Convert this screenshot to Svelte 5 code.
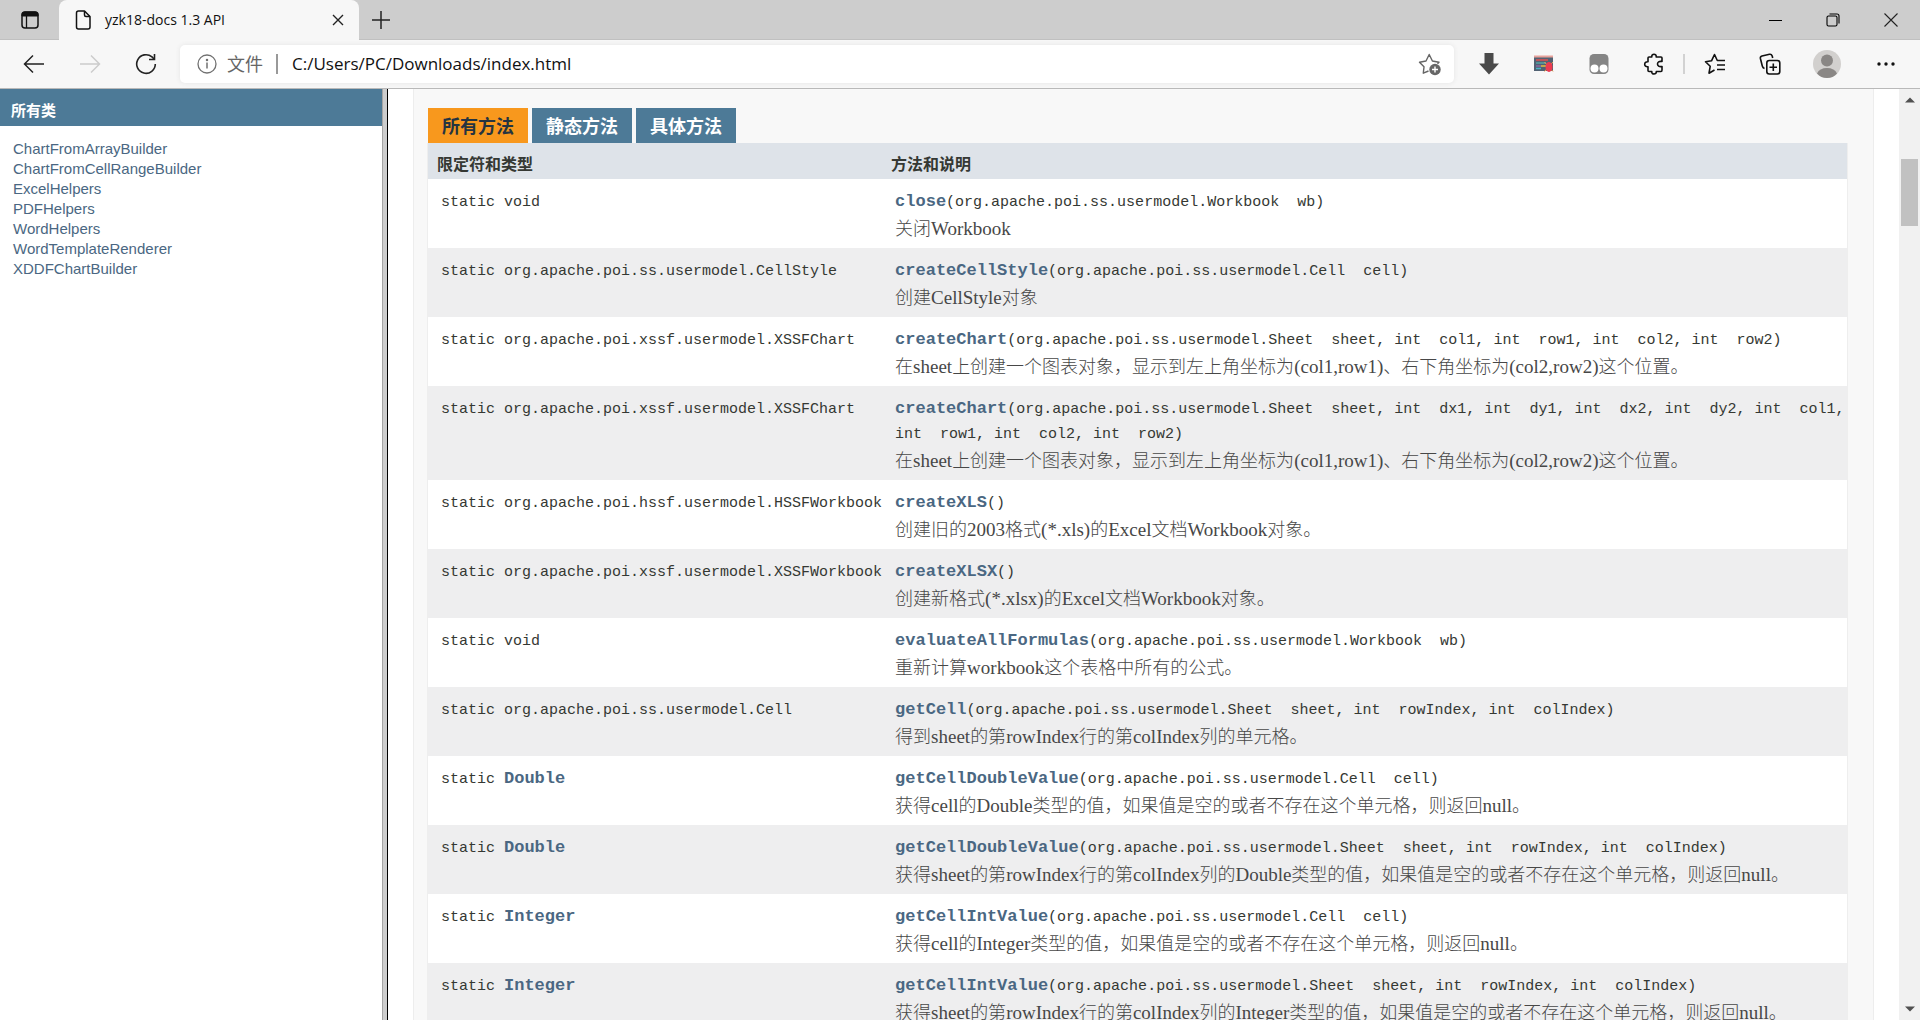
<script lang="ts">
  type Method = {
    type: string;
    linked?: boolean;
    name: string;
    params: string[];
    desc: string;
  };

  const classes = [
    "ChartFromArrayBuilder",
    "ChartFromCellRangeBuilder",
    "ExcelHelpers",
    "PDFHelpers",
    "WordHelpers",
    "WordTemplateRenderer",
    "XDDFChartBuilder",
  ];

  const tabs = ["所有方法", "静态方法", "具体方法"];
  let activeTab = $state(0);
  let address = $state("C:/Users/PC/Downloads/index.html");

  const model = "org.apache.poi.ss.usermodel.";
  const workbook = model + "Workbook wb";
  const cell = model + "Cell cell";
  const sheet = model + "Sheet sheet";

  const methods: Method[] = [
    { type: "void", name: "close", params: [workbook], desc: "关闭Workbook" },
    { type: model + "CellStyle", name: "createCellStyle", params: [cell], desc: "创建CellStyle对象" },
    {
      type: "org.apache.poi.xssf.usermodel.XSSFChart",
      name: "createChart",
      params: [sheet, "int col1", "int row1", "int col2", "int row2"],
      desc: "在sheet上创建一个图表对象，显示到左上角坐标为(col1,row1)、右下角坐标为(col2,row2)这个位置。",
    },
    {
      type: "org.apache.poi.xssf.usermodel.XSSFChart",
      name: "createChart",
      params: [sheet, "int dx1", "int dy1", "int dx2", "int dy2", "int col1", "int row1", "int col2", "int row2"],
      desc: "在sheet上创建一个图表对象，显示到左上角坐标为(col1,row1)、右下角坐标为(col2,row2)这个位置。",
    },
    { type: "org.apache.poi.hssf.usermodel.HSSFWorkbook", name: "createXLS", params: [], desc: "创建旧的2003格式(*.xls)的Excel文档Workbook对象。" },
    { type: "org.apache.poi.xssf.usermodel.XSSFWorkbook", name: "createXLSX", params: [], desc: "创建新格式(*.xlsx)的Excel文档Workbook对象。" },
    { type: "void", name: "evaluateAllFormulas", params: [workbook], desc: "重新计算workbook这个表格中所有的公式。" },
    { type: model + "Cell", name: "getCell", params: [sheet, "int rowIndex", "int colIndex"], desc: "得到sheet的第rowIndex行的第colIndex列的单元格。" },
    { type: "Double", linked: true, name: "getCellDoubleValue", params: [cell], desc: "获得cell的Double类型的值，如果值是空的或者不存在这个单元格，则返回null。" },
    {
      type: "Double",
      linked: true,
      name: "getCellDoubleValue",
      params: [sheet, "int rowIndex", "int colIndex"],
      desc: "获得sheet的第rowIndex行的第colIndex列的Double类型的值，如果值是空的或者不存在这个单元格，则返回null。",
    },
    { type: "Integer", linked: true, name: "getCellIntValue", params: [cell], desc: "获得cell的Integer类型的值，如果值是空的或者不存在这个单元格，则返回null。" },
    {
      type: "Integer",
      linked: true,
      name: "getCellIntValue",
      params: [sheet, "int rowIndex", "int colIndex"],
      desc: "获得sheet的第rowIndex行的第colIndex列的Integer类型的值，如果值是空的或者不存在这个单元格，则返回null。",
    },
  ];

  // type and parameter name stay together on one line
  function signature(params: string[]) {
    return "(" + params.map((p) => p.replace(" ", "\u00a0\u00a0")).join(", ") + ")";
  }

  // odd entries are the latin runs
  function runs(text: string) {
    return text.split(/([\x21-\x7e]+)/);
  }
</script>

<div class="browser">
  <header class="titlebar">
    <button class="workspace" aria-label="Tab actions">
      <svg width="18" height="18" viewBox="0 0 18 18" fill="none" stroke="#111">
        <rect x="1" y="1" width="16" height="16" rx="3" stroke-width="1.5" />
        <path d="M1 5V3.500Q1 1 3.500 1H14.500Q17 1 17 3.500V5Z" fill="#111" />
        <path d="M5.500 5V17" stroke-width="1.300" />
      </svg>
    </button>
    <div class="page-tab">
      <svg width="16" height="20" viewBox="0 0 16 20" fill="none" stroke="#111" stroke-width="1.500" stroke-linejoin="round">
        <path d="M3.500 1H9.500L15 6.500V17Q15 19 13 19H3.500Q1.500 19 1.500 17V3Q1.500 1 3.500 1Z" />
        <path d="M9.500 1V5Q9.500 6.500 11 6.500H15" />
      </svg>
      <span class="page-title">yzk18-docs 1.3 API</span>
      <button class="close-tab" aria-label="Close tab">
        <svg width="12" height="12" viewBox="0 0 12 12" stroke="#222" stroke-width="1.400"><path d="M1 1L11 11M11 1L1 11" /></svg>
      </button>
    </div>
    <button class="new-tab" aria-label="New tab">
      <svg width="18" height="18" viewBox="0 0 18 18" stroke="#222" stroke-width="1.500"><path d="M9 0V18M0 9H18" /></svg>
    </button>
    <div class="window-controls">
      <button aria-label="Minimize">
        <svg width="13" height="13" viewBox="0 0 13 13" stroke="#000"><path d="M0 6.500H13" /></svg>
      </button>
      <button aria-label="Restore">
        <svg width="14" height="14" viewBox="0 0 14 14" fill="none" stroke="#000" stroke-width="1.100">
          <rect x="1" y="3" width="10" height="10" rx="1.500" />
          <path d="M3.500 1H11Q13 1 13 3V10.500" />
        </svg>
      </button>
      <button aria-label="Close">
        <svg width="14" height="14" viewBox="0 0 14 14" stroke="#222" stroke-width="1.100"><path d="M.5 .5L13.500 13.500M13.500 .5L.5 13.500" /></svg>
      </button>
    </div>
  </header>

  <nav class="toolbar">
    <div class="history">
      <button aria-label="Back">
        <svg width="22" height="20" viewBox="0 0 22 20" fill="none" stroke="#222" stroke-width="1.500"><path d="M21 10H1.500M10 1.500L1.500 10L10 18.500" /></svg>
      </button>
      <button aria-label="Forward" disabled>
        <svg width="22" height="20" viewBox="0 0 22 20" fill="none" stroke="#ccc" stroke-width="1.500"><path d="M1 10H20.500M12 1.500L20.500 10L12 18.500" /></svg>
      </button>
      <button aria-label="Refresh">
        <svg width="22" height="22" viewBox="0 0 22 22" fill="none" stroke="#222" stroke-width="1.600">
          <path d="M20.300 11A9.300 9.300 0 1 1 17 3.900L19.500 6.500" />
          <path d="M19.500 1V6.500H14" />
        </svg>
      </button>
    </div>

    <div class="address">
      <svg width="20" height="20" viewBox="0 0 20 20" fill="none" stroke="#717171" stroke-width="1.300">
        <circle cx="10" cy="10" r="9" />
        <path d="M10 8.500V14.500" stroke-width="1.500" />
        <circle cx="10" cy="6" r=".6" fill="#717171" />
      </svg>
      <label for="url">文件</label>
      <input id="url" type="text" spellcheck="false" bind:value={address} />
      <button class="add-favorite" aria-label="Add to favorites">
        <svg width="24" height="24" viewBox="0 0 24 24" fill="none" stroke="#666" stroke-width="1.400" stroke-linejoin="round">
          <path d="M10.500 19L5.300 21.200L6 14.800L1.500 10.200L8 9L11.200 2.500L14.400 9L21 10.200L19.500 11.800" />
          <circle cx="17" cy="17.500" r="5.700" fill="#666" stroke="none" />
          <path d="M17 14.500V20.500M14 17.500H20" stroke="#fff" />
        </svg>
      </button>
    </div>

    <div class="extensions">
      <button aria-label="Downloads">
        <svg width="22" height="22" viewBox="0 0 22 22" fill="#4a4a4a"><path d="M6.500 0H15.500V10.500H21L11 21.500L1 10.500H6.500Z" /></svg>
      </button>
      <button aria-label="Script debugger">
        <svg width="22" height="18" viewBox="0 0 22 18">
          <rect x="1" y="1" width="19" height="15" fill="#526273" />
          <path d="M1 1.500H20" stroke="#e8a29b" stroke-width="2" />
          <path d="M3 5H15" stroke="#e25151" stroke-width="1.500" />
          <path d="M3 8H13" stroke="#55a4a5" stroke-width="1.500" />
          <path d="M3 11H8" stroke="#9066a0" stroke-width="1.500" />
          <path d="M8 11H13" stroke="#e6bd41" stroke-width="1.500" />
          <path d="M3 13.500H8" stroke="#4bb3c5" stroke-width="1.500" />
          <path d="M11.500 7L20 16.500M20 7L11.500 16.500" stroke="#f0a150" />
          <ellipse cx="16" cy="12" rx="3.500" ry="5" fill="#ed3b50" />
        </svg>
      </button>
      <button aria-label="User scripts">
        <svg width="20" height="20" viewBox="0 0 20 20">
          <rect x=".5" y="0" width="19" height="20" rx="4.500" fill="#858585" />
          <circle cx="5.500" cy="14.500" r="4" fill="#fff" />
          <circle cx="14.500" cy="14.500" r="4" fill="#fff" />
        </svg>
      </button>
      <button aria-label="Extensions">
        <svg width="22" height="22" viewBox="0 0 22 22" fill="none" stroke="#111" stroke-width="1.600" stroke-linejoin="round">
          <path d="M6 4H8.800C8.500 2 9.800 1.200 11 1.200S13.500 2 13.200 4H18Q19 4 19 5V8.500C16 8 14.500 9.300 14.500 11S16 14 19 13.500V17Q19 18.500 18 18.500H13.300C13.500 20.200 12.300 21 11 21S8.500 20.200 8.800 18.500H6Q5 18.500 5 17.500V13.700C2.800 14 1.700 12.700 1.700 11.200S2.800 8.500 5 8.700V5Q5 4 6 4Z" />
        </svg>
      </button>
      <span class="divider"></span>
      <button aria-label="Favorites">
        <svg width="22" height="22" viewBox="0 0 22 22" fill="none" stroke="#111" stroke-width="1.600" stroke-linejoin="round">
          <path d="M10.500 17L5 20.200L6.200 13.300L1.500 8.700L7.500 7.800L10.500 1.500L13.300 7.500H21M13 12H21M13 16.500H21" />
        </svg>
      </button>
      <button aria-label="Collections">
        <svg width="22" height="22" viewBox="0 0 22 22" fill="none" stroke="#111" stroke-width="1.600" stroke-linejoin="round">
          <rect x="7.800" y="7.500" width="13" height="13.500" rx="2.500" />
          <path d="M14.300 10.500V18M10.500 14.300H18" />
          <path d="M5.500 15.500Q3.800 15 3.300 13L1.400 5.500Q1 3.500 3 3L10.500 1.300Q12.500 1 13.200 3L13.700 5" />
        </svg>
      </button>
      <button class="profile" aria-label="Profile">
        <svg width="28" height="28" viewBox="0 0 28 28">
          <circle cx="14" cy="14" r="14" fill="#d2d0ce" />
          <circle cx="14" cy="10.500" r="6" fill="#8a8785" />
          <path d="M4 23.500Q6.500 18 14 18T24 23.500Q20 28 14 28T4 23.500Z" fill="#8a8785" />
        </svg>
      </button>
      <button class="more" aria-label="Settings and more">
        <svg width="18" height="4" viewBox="0 0 18 4" fill="#111"><circle cx="2" cy="2" r="1.700" /><circle cx="9" cy="2" r="1.700" /><circle cx="16" cy="2" r="1.700" /></svg>
      </button>
    </div>
  </nav>

  <div class="frames">
    <aside>
      <h1>所有类</h1>
      <ul>
        {#each classes as name}
          <li><a href="#{name}">{name}</a></li>
        {/each}
      </ul>
    </aside>
    <div class="splitter"></div>

    <main>
      <section class="summary">
        <div class="tabs" role="tablist">
          {#each tabs as tab, i}
            <button role="tab" aria-selected={activeTab === i} class:active={activeTab === i} onclick={() => (activeTab = i)}>{tab}</button>
          {/each}
        </div>
        <table>
          <thead>
            <tr>
              <th class="first" scope="col">限定符和类型</th>
              <th scope="col">方法和说明</th>
            </tr>
          </thead>
          <tbody>
            {#each methods as m}
              <tr>
                <td class="first">
                  <code>static {#if m.linked}<a href="#{m.type}">{m.type}</a>{:else}{m.type}{/if}</code>
                </td>
                <td>
                  <code><a href="#{m.name}">{m.name}</a>{signature(m.params)}</code>
                  <div class="desc">{#each runs(m.desc) as run, i}{#if i % 2}<span>{run}</span>{:else}{run}{/if}{/each}</div>
                </td>
              </tr>
            {/each}
          </tbody>
        </table>
      </section>
    </main>

    <div class="scrollbar">
      <button aria-label="Scroll up">
        <svg width="10" height="6" viewBox="0 0 10 6" fill="#505050"><path d="M0 5.500L5 .5L10 5.500Z" /></svg>
      </button>
      <div class="track"><div class="thumb"></div></div>
      <button aria-label="Scroll down">
        <svg width="10" height="6" viewBox="0 0 10 6" fill="#505050"><path d="M0 .5L5 5.500L10 .5Z" /></svg>
      </button>
    </div>
  </div>
</div>

<style>
  :global(body) {
    margin: 0;
    overflow: hidden;
  }

  .browser {
    display: flex;
    flex-direction: column;
    height: 100vh;
    background: #fff;
    font-family: "Open Sans", "Noto Sans CJK SC", sans-serif;
  }

  button {
    display: flex;
    align-items: center;
    justify-content: center;
    padding: 0;
    border: 0;
    background: none;
    font-family: inherit;
  }

  a {
    color: #4a6782;
    text-decoration: none;
  }

  /* browser chrome */
  .titlebar {
    display: flex;
    flex: none;
    height: 40px;
    background: #cdcdcd;
    box-shadow: inset 0 -1px #c0c0c0;
  }

  .workspace {
    width: 59px;
  }

  .page-tab {
    display: flex;
    align-items: center;
    box-sizing: border-box;
    width: 300px;
    padding: 0 9px 0 16px;
    gap: 14px;
    background: #f7f7f7;
    border-radius: 8px 8px 0 0;
  }

  .page-title {
    flex: 1;
    padding-bottom: 2px;
    font-size: 14px;
    color: #111;
  }

  .close-tab {
    width: 24px;
    height: 24px;
  }

  .new-tab {
    width: 43px;
  }

  .window-controls {
    display: flex;
    margin-left: auto;
  }

  .window-controls button {
    width: 58px;
  }

  .toolbar {
    display: flex;
    flex: none;
    align-items: center;
    height: 48px;
    padding: 0 5px 0 6px;
    background: #f7f7f7;
    border-bottom: 1px solid #b9b9b9;
  }

  .history {
    display: flex;
    width: 174px;
  }

  .history button {
    width: 56px;
    height: 36px;
  }

  .address {
    display: flex;
    flex: 1;
    align-items: center;
    height: 38px;
    padding: 0 12px 0 17px;
    background: #fff;
    border-radius: 5px;
    box-shadow: 0 0 5px #e4e4e4;
  }

  .address label {
    margin-left: 10px;
    padding-right: 13px;
    border-right: 2px solid #999;
    font-size: 18px;
    line-height: 20px;
    color: #666;
  }

  .address input {
    flex: 1;
    min-width: 0;
    padding: 0 0 2px 14px;
    border: 0;
    outline: 0;
    font-family: inherit;
    font-size: 17px;
    color: #111;
  }

  .extensions {
    display: flex;
    align-items: center;
    margin-left: 7px;
  }

  .extensions button {
    width: 55px;
    height: 36px;
  }

  .extensions .profile {
    width: 60px;
  }

  .extensions .more {
    width: 58px;
  }

  .divider {
    width: 2px;
    height: 20px;
    margin: 0 2px;
    background: #d2d2d2;
  }

  /* documentation frames */
  .frames {
    display: flex;
    flex: 1;
    min-height: 0;
  }

  aside {
    flex: 0 0 382px;
  }

  h1 {
    margin: 0;
    padding: 9px 11px 4px;
    background: #4d7a97;
    font-size: 15px;
    line-height: 24px;
    font-weight: bold;
    color: #fff;
  }

  ul {
    margin: 0;
    padding: 13px;
    list-style: none;
    font-family: "Liberation Sans", sans-serif;
    font-size: 15px;
    line-height: 20px;
  }

  .splitter {
    flex: none;
    width: 4px;
    background: #cdcdcd;
    border-left: 1px solid #a5a5a5;
    border-right: 1px solid #000;
  }

  main {
    flex: 1;
    min-width: 0;
    padding: 0 25px;
    overflow: hidden;
  }

  .summary {
    padding: 19px 25px 19px 13px;
    background: #f8f8f8;
    border: solid #ededed;
    border-width: 0 1px;
  }

  .tabs {
    display: flex;
    gap: 4px;
    padding-left: 1px;
  }

  .tabs button {
    height: 35px;
    padding: 0 14px 2px;
    background: #4d7a97;
    font-size: 18px;
    font-weight: bold;
    color: #fff;
  }

  .tabs .active {
    background: #f8981d;
    color: #253441;
  }

  table {
    width: 100%;
    border-collapse: separate;
    border-spacing: 0;
    border: solid #eee;
    border-width: 0 1px;
  }

  th {
    padding: 9px 0 3px 9px;
    background: #dee3e9;
    text-align: left;
    font-size: 16px;
    line-height: 24px;
    font-weight: bold;
    color: #353833;
  }

  td {
    padding: 11px 0 6px 13px;
    background: #fff;
    vertical-align: top;
    font-size: 18px;
    line-height: 25px;
    color: #353833;
  }

  .first {
    width: 1%;
    white-space: nowrap;
  }

  tbody tr:nth-child(even) td {
    background: #eeeeef;
  }

  code {
    display: block;
    font-family: "Liberation Mono", monospace;
    font-size: 15px;
  }

  code a {
    font-size: 17px;
    line-height: 1;
    font-weight: bold;
  }

  .desc {
    margin-top: 2px;
    font-family: "Liberation Serif", "Noto Sans CJK SC", serif;
    font-weight: 300;
    color: #474747;
  }

  .desc span {
    font-size: 19px;
    line-height: 1;
  }

  .scrollbar {
    display: flex;
    flex: none;
    flex-direction: column;
    width: 21px;
    background: #f1f1f1;
  }

  .scrollbar button {
    height: 22px;
  }

  .track {
    flex: 1;
    padding: 48px 2px 0;
  }

  .thumb {
    height: 67px;
    background: #c1c1c1;
  }
</style>
